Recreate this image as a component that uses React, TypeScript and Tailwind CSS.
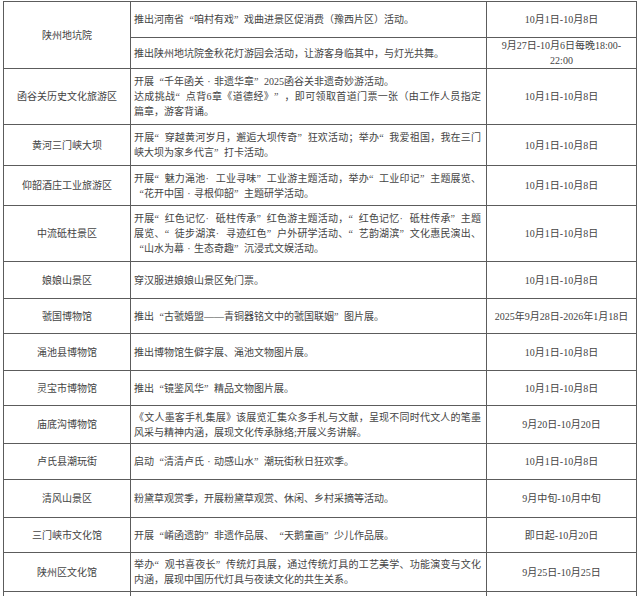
type Entry = { lines: string[]; date: string[]; h: number };
type Row = { name: string; entries: Entry[] };

const rows: Row[] = [
  {
    name: '陕州地坑院',
    entries: [
      { lines: ['推出河南省“咱村有戏”戏曲进景区促消费（豫西片区）活动。'], date: ['10月1日-10月8日'], h: 36 },
      { lines: ['推出陕州地坑院金秋花灯游园会活动，让游客身临其中，与灯光共舞。'], date: ['9月27日-10月6日每晚18:00-', '22:00'], h: 31 },
    ],
  },
  {
    name: '函谷关历史文化旅游区',
    entries: [
      {
        lines: ['开展“千年函关·非遗华章”2025函谷关非遗奇妙游活动。', '*达成挑战“点背6章《道德经》”，即可领取首道门票一张（由工作人员指定', '篇章，游客背诵。'],
        date: ['10月1日-10月8日'],
        h: 56,
      },
    ],
  },
  {
    name: '黄河三门峡大坝',
    entries: [
      { lines: ['*开展“穿越黄河岁月，邂逅大坝传奇”狂欢活动；举办“我爱祖国，我在三门', '峡大坝为家乡代言”打卡活动。'], date: ['10月1日-10月8日'], h: 41 },
    ],
  },
  {
    name: '仰韶酒庄工业旅游区',
    entries: [
      { lines: ['*开展“魅力渑池·工业寻味”工业游主题活动，举办“工业印记”主题展览、', '“花开中国·寻根仰韶”主题研学活动。'], date: ['10月1日-10月8日'], h: 40 },
    ],
  },
  {
    name: '中流砥柱景区',
    entries: [
      {
        lines: ['*开展“红色记忆·砥柱传承”红色游主题活动，“红色记忆·砥柱传承”主题', '*展览、“徒步湖滨·寻迹红色”户外研学活动、“艺韵湖滨”文化惠民演出、', '“山水为幕·生态奇趣”沉浸式文娱活动。'],
        date: ['10月1日-10月8日'],
        h: 56,
      },
    ],
  },
  { name: '娘娘山景区', entries: [{ lines: ['穿汉服进娘娘山景区免门票。'], date: ['10月1日-10月8日'], h: 37 }] },
  { name: '虢国博物馆', entries: [{ lines: ['推出“古虢婚盟——青铜器铭文中的虢国联姻”图片展。'], date: ['2025年9月28日-2026年1月18日'], h: 35 }] },
  { name: '渑池县博物馆', entries: [{ lines: ['推出博物馆生僻字展、渑池文物图片展。'], date: ['10月1日-10月8日'], h: 37 }] },
  { name: '灵宝市博物馆', entries: [{ lines: ['推出“镜鉴风华”精品文物图片展。'], date: ['10月1日-10月8日'], h: 35 }] },
  {
    name: '庙底沟博物馆',
    entries: [
      { lines: ['*《文人墨客手札集展》该展览汇集众多手札与文献，呈现不同时代文人的笔墨', '风采与精神内涵，展现文化传承脉络;开展义务讲解。'], date: ['9月20日-10月20日'], h: 38 },
    ],
  },
  { name: '卢氏县潮玩街', entries: [{ lines: ['启动“清清卢氏·动感山水”潮玩街秋日狂欢季。'], date: ['10月1日-10月8日'], h: 36 }] },
  { name: '清风山景区', entries: [{ lines: ['粉黛草观赏季，开展粉黛草观赏、休闲、乡村采摘等活动。'], date: ['9月中旬-10月中旬'], h: 38 }] },
  { name: '三门峡市文化馆', entries: [{ lines: ['开展“崤函遗韵”非遗作品展、“天鹅童画”少儿作品展。'], date: ['即日起-10月20日'], h: 35 }] },
  {
    name: '陕州区文化馆',
    entries: [
      { lines: ['*举办“观书喜夜长”传统灯具展，通过传统灯具的工艺美学、功能演变与文化', '内涵，展现中国历代灯具与夜读文化的共生关系。'], date: ['9月25日-10月25日'], h: 39 },
    ],
  },
];

const cell = 'border border-[#5c5c5c] align-middle';

// full-width punctuation: quotes and middle dot take a whole em as in the print
function Text({ s }: { s: string }) {
  const parts = s.split(/([“”·])/);
  return (
    <>
      {parts.map((p, i) =>
        p === '“' ? (
          <span key={i} className="inline-block w-[1em] text-right">“</span>
        ) : p === '”' ? (
          <span key={i} className="inline-block w-[1em] text-left">”</span>
        ) : p === '·' ? (
          <span key={i} className="inline-block w-[1em] text-center">·</span>
        ) : (
          p
        )
      )}
    </>
  );
}

function Lines({ lines }: { lines: string[] }) {
  return (
    <>
      {lines.map((l, i) =>
        l.startsWith('*') ? (
          <div key={i} className="text-justify [text-align-last:justify]">
            <Text s={l.slice(1)} />
          </div>
        ) : (
          <div key={i}>
            <Text s={l} />
          </div>
        )
      )}
    </>
  );
}

export default function App() {
  return (
    <div
      className="min-h-[596px] bg-white pl-[3px] pt-px text-[10px] leading-[15px] text-[#444]"
      style={{ fontFamily: '"Liberation Serif", "Noto Sans CJK SC", serif' }}
      lang="zh-CN"
    >
      <table className="table-fixed border-collapse">
        <colgroup>
          <col className="w-[127px]" />
          <col className="w-[356px]" />
          <col className="w-[150px]" />
        </colgroup>
        <tbody>
          {rows.map((r) =>
            r.entries.map((e, j) => (
              <tr key={r.name + j} style={{ height: e.h }}>
                {j === 0 && (
                  <td rowSpan={r.entries.length} className={`${cell} text-center`}>
                    {r.name}
                  </td>
                )}
                <td className={`${cell} pl-[3px] pr-[5px]`}>
                  <Lines lines={e.lines} />
                </td>
                <td className={`${cell} text-center`}>
                  {e.date.map((d, k) => (
                    <div key={k}>{d}</div>
                  ))}
                </td>
              </tr>
            ))
          )}
          <tr className="h-[30px]">
            <td className={cell}></td>
            <td className={cell}></td>
            <td className={cell}></td>
          </tr>
        </tbody>
      </table>
    </div>
  );
}
